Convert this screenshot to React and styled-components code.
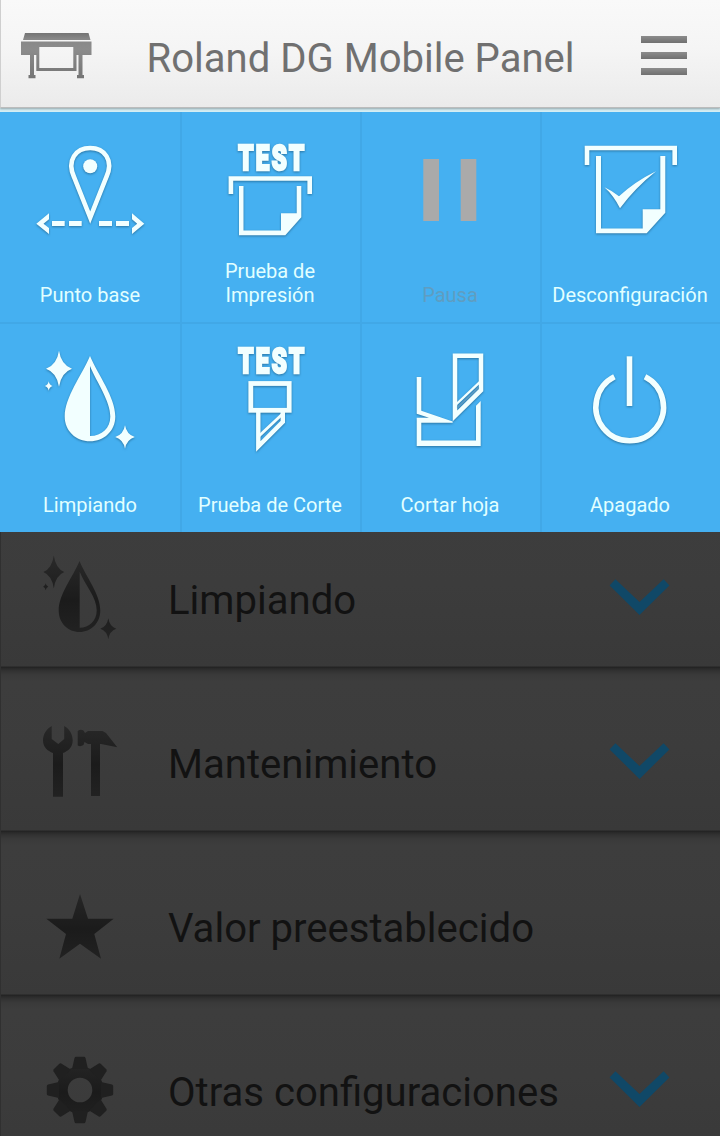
import React from "react";
import styled, { createGlobalStyle } from "styled-components";

const Global = createGlobalStyle`
  * { box-sizing: border-box; }
  html, body { margin: 0; background: #3b3b3b; }
  body { font-family: Roboto, "Liberation Sans", sans-serif; }
`;

const Page = styled.div`
  width: 720px;
  height: 1136px;
  overflow: hidden;
  display: flex;
  flex-direction: column;
  background: #3b3b3b;
`;

const HeaderArea = styled.div`
  height: 112px;
  flex: none;
  background: #d3edf3;
`;

const Header = styled.header`
  height: 108px;
  display: flex;
  align-items: center;
  padding: 0 33px 0 20px;
  border-left: 1px solid #cfcfcf;
  border-bottom: 1px solid #bcbcbc;
  background: linear-gradient(#f9f9f9, #f5f5f5 45%, #ebebeb);
  box-shadow: 0 1px 2px rgba(0, 0, 0, 0.3);
`;

const Title = styled.h1`
  flex: 1;
  margin: 10px 0 0 54.5px;
  font-size: 40.05px;
  line-height: 48px;
  font-weight: 400;
  color: #707070;
  white-space: nowrap;
`;

const MenuButton = styled.button`
  width: 46px;
  height: 39px;
  margin-top: 4px;
  padding: 0;
  border: 0;
  background: none;
  display: flex;
  flex-direction: column;
  justify-content: space-between;
`;

const MenuBar = styled.span`
  height: 7px;
  width: 100%;
  background: linear-gradient(#8c8c8c, #707070);
`;

const PrinterDrawing = styled.svg`
  flex: none;
  margin-top: 4px;
`;

const Grid = styled.nav`
  flex: none;
  display: grid;
  grid-template-columns: repeat(4, 180px);
  grid-auto-rows: 210px;
  background: #45b0f1;
`;

const Tile = styled.div`
  display: flex;
  flex-direction: column;
  align-items: center;
  justify-content: space-between;
  padding: ${(p) => (p.$top ? "20px" : "22px")} 0 15px;
  border-top: ${(p) => (p.$top ? "2px solid #41a8e7" : "0")};
  box-shadow: ${(p) => (p.$left ? "inset 2px 0 0 #41a8e7" : "none")};
`;

const TileIcon = styled.svg`
  display: block;
  flex: none;
  width: 120px;
  height: 120px;
  overflow: visible;
  color: #f2ffff;
  filter: ${(p) => (p.$flat ? "none" : "drop-shadow(0 1px 1px rgba(20, 70, 100, 0.55))")};
`;

const TileLabel = styled.span`
  font-size: 20px;
  line-height: 24px;
  text-align: center;
  white-space: pre-line;
  color: ${(p) => (p.$disabled ? "#5f9dc1" : "#e2ffff")};
`;

const List = styled.main`
  flex: 1;
  min-height: 0;
  overflow: hidden;
`;

const Row = styled.section`
  height: 164px;
  display: flex;
  align-items: flex-start;
  padding: 49px 50px 0 40px;
  background: linear-gradient(
    #282828 0, #323232 3px, #3a3a3a 7px, #3d3d3d 14px,
    #3c3c3c 80px, #393939 162px, #242424 163px);
  box-shadow: inset 1px 0 0 #303030;
  &:first-child { margin-top: -28px; }
`;

const RowIcon = styled.svg`
  flex: none;
  width: 80px;
  height: 90px;
`;

const RowLabel = styled.span`
  flex: 1;
  margin: 24px 0 0 48px;
  font-size: 40.1px;
  line-height: 48px;
  color: #121212;
  white-space: nowrap;
`;

const Chevron = styled.svg`
  flex: none;
  width: 62px;
  height: 40px;
  margin-top: 25px;
`;

const sparkle = (cx, cy, rx, ry) => {
  const k = 0.24;
  return `M${cx} ${cy - ry}Q${cx + rx * k * 0.7} ${cy - ry * k * 0.9} ${cx + rx} ${cy}Q${cx + rx * k * 0.7} ${cy + ry * k * 0.9} ${cx} ${cy + ry}Q${cx - rx * k * 0.7} ${cy + ry * k * 0.9} ${cx - rx} ${cy}Q${cx - rx * k * 0.7} ${cy - ry * k * 0.9} ${cx} ${cy - ry}Z`;
};

const TestWord = ({ y }) => (
  <text
    transform={`translate(58.2 ${y}) scale(0.7 1)`}
    fontFamily="Roboto, sans-serif" fontWeight="900" fontSize="34.5"
    textLength="94.5" lengthAdjust="spacing"
    fill="currentColor" stroke="currentColor" strokeWidth="2.6"
  >TEST</text>
);

const BasePoint = () => (
  <>
    <path d="M90.2 105.5L74 65C66.5 48 76 36 90.2 36C104.4 36 114 48 106.4 65Z" fill="none" stroke="currentColor" strokeWidth="4.6" strokeMiterlimit="10" />
    <circle cx="90.2" cy="54.3" r="7" fill="currentColor" />
    <path fill="currentColor" d="M36.3 111.7L49 101.3V107.3L43.5 111.7L49 116V122ZM52 109h12.7v5H52zM69 109h12.7v5H69zM99 109h13v5H99zM116 109h13v5h-13zM144.3 111.7L132 101.3V107.3L137.2 111.7L132 116V122Z" />
  </>
);

const TestPrint = () => (
  <>
    <TestWord y="58.4" />
    <path d="M50.9 82V66.5H129.7V82" fill="none" stroke="currentColor" strokeWidth="4.6" />
    <path fill="currentColor" d="M59 74h4.5v44.5H101V101.3h15.7V74h4.6V105.3L105.3 123.3H59Z" />
  </>
);

const Pause = () => <path fill="#aaaaaa" d="M63.3 47H79V109H63.3zM100.7 47h15.6V109h-15.6z" />;

const Unset = () => (
  <>
    <path d="M47 53V36H134.7V53" fill="none" stroke="currentColor" strokeWidth="4.6" />
    <path fill="currentColor" d="M56 44h5v72.5h41.7V97.3h17.6V44h5v56.7L106.7 121.3H56Z" />
    <path fill="currentColor" d="M64.5 75.3Q72.5 79 79 84.3Q95 69.5 116 59.3Q95 76 80 96.3Q73.5 83.5 64.5 75.3Z" />
  </>
);

const Clean = () => (
  <>
    <path fill="currentColor" fillRule="evenodd" d="M90 34C98 53 115.3 75 115.3 94.5C115.3 109 104 119.3 90 119.3S64.7 109 64.7 94.5C64.7 75 82 53 90 34ZM90 44V114C102 114 110.3 106 110.3 94.5C110.3 79 97 61 90 44Z" />
    <path fill="currentColor" d={sparkle(59, 46.7, 13, 18)} />
    <path fill="currentColor" d={sparkle(48.7, 64, 3.8, 4.8)} />
    <path fill="currentColor" d={sparkle(125, 115, 9.8, 11.8)} />
  </>
);

const TestCut = () => (
  <>
    <TestWord y="51.4" />
    <g fill="none" stroke="currentColor">
      <rect x="70.8" y="61.5" width="38.4" height="26.8" strokeWidth="4.8" />
      <path d="M78.3 90V124.5L102.8 99.8V90" strokeWidth="4.4" strokeMiterlimit="10" />
      <path d="M79 114L103 91.5" strokeWidth="3" />
    </g>
  </>
);

const CutSheet = () => (
  <>
    <g fill="none" stroke="currentColor">
      <path d="M95 93.8V33.8H121V68.2Z" strokeWidth="4.5" strokeMiterlimit="10" />
      <path d="M96 82.5L120 59.8" strokeWidth="2.4" />
    </g>
    <path d="M97.3 85.7L118.7 65.3" stroke="#5d9bc2" strokeWidth="1.8" />
    <path fill="currentColor" d="M56.7 55h4.6v33.7L92.7 99.4v1.4H61.3v17.7H116V83.7l4.7-4.7V124H56.7V95.7H69L56.7 91.8Z" />
  </>
);

const Power = () => (
  <g fill="none" stroke="currentColor" strokeWidth="5.6">
    <path d="M74.4 54.8A33.8 33.8 0 1 0 105 54.8" />
    <path d="M89.5 34.3V84" />
  </g>
);

const RowClean = () => (
  <>
    <path fillRule="evenodd" d="M79.5 58C86 74 100.3 91 100.3 107.5C100.3 120 91 129 79.5 129S58.7 120 58.7 107.5C58.7 91 73 74 79.5 58ZM79.7 68.7V124.7C89 124.7 96.7 118 96.7 107.5C96.7 94 85.5 83 79.7 68.7Z" />
    <path d={sparkle(53.8, 69, 10.5, 16.5)} />
    <path d={sparkle(45.7, 83.7, 2.6, 3.5)} />
    <path d={sparkle(108.3, 125.7, 8, 10.5)} />
  </>
);

const Tools = () => (
  <>
    <path d="M51.7 59V72L58.3 77L64.2 72V59C70 62 72.7 68 72.7 73.5C72.7 80 68.5 84 63 86V129.7H53V86C47.5 84 43 80 43 73.5C43 67 46.5 62 51.7 59Z" />
    <path d="M77.7 64Q80.5 62 83.5 63.5L85 66L88 64H102.5L106 66L117.3 80.3L101 77H100V129H91V77H88L84.5 75L83.5 78Q80.5 80 77.7 78.5Z" />
  </>
);

const Star = () => (
  <path d="M80 63L88 87.7H113.7L94.3 103L101 127.7L80 112.7L59.3 127.7L66 103L46.3 87.7H72.3Z" />
);

const Gear = () => (
  <>
    <circle cx="80" cy="95" r="17.9" fill="none" stroke="url(#rowInk)" strokeWidth="11.2" />
    {[0, 45, 90, 135, 180, 225, 270, 315].map((a) => (
      <path key={a} fill="#202020" transform={`rotate(${a} 80 95)`} d="M72 74L74.5 63Q75 61.8 76 61.8H84Q85 61.8 85.5 63L88 74Z" />
    ))}
  </>
);

const tiles = [
  { label: "Punto base", Icon: BasePoint },
  { label: "Prueba de\nImpresión", Icon: TestPrint },
  { label: "Pausa", Icon: Pause, disabled: true },
  { label: "Desconfiguración", Icon: Unset },
  { label: "Limpiando", Icon: Clean },
  { label: "Prueba de Corte", Icon: TestCut },
  { label: "Cortar hoja", Icon: CutSheet },
  { label: "Apagado", Icon: Power },
];

const rows = [
  { label: "Limpiando", Icon: RowClean, expandable: true },
  { label: "Mantenimiento", Icon: Tools, expandable: true },
  { label: "Valor preestablecido", Icon: Star },
  { label: "Otras configuraciones", Icon: Gear, expandable: true },
];

const PrinterIcon = () => (
  <PrinterDrawing width="71" height="46" viewBox="0 0 71 46">
    <defs>
      <linearGradient id="printerInk" gradientUnits="userSpaceOnUse" x1="0" y1="0" x2="0" y2="46">
        <stop offset="0" stopColor="#747474" />
        <stop offset="0.13" stopColor="#888" />
        <stop offset="0.35" stopColor="#8c8c8c" />
        <stop offset="1" stopColor="#747474" />
      </linearGradient>
    </defs>
    <path fill="url(#printerInk)" fillRule="evenodd" d="M4 0H67.5L69.5 7H2ZM0 8.5H70.5V22H61.5V42H63V45.2H56V42H57.5V22H55.5V38H15.3V22H13V42H14.5V45.2H7.5V42H9V22H0ZM18.3 14V35H52.3V14Z" />
  </PrinterDrawing>
);

export default function App() {
  return (
    <>
      <Global />
      <Page>
        <HeaderArea>
          <Header>
            <PrinterIcon />
            <Title>Roland DG Mobile Panel</Title>
            <MenuButton aria-label="Menu"><MenuBar /><MenuBar /><MenuBar /></MenuButton>
          </Header>
        </HeaderArea>
        <Grid>
          {tiles.map(({ label, Icon, disabled }, i) => (
            <Tile key={label} $left={i % 4 > 0} $top={i > 3}>
              <TileIcon viewBox="30 22 120 120" $flat={disabled}><Icon /></TileIcon>
              <TileLabel $disabled={disabled}>{label}</TileLabel>
            </Tile>
          ))}
        </Grid>
        <List>
          {rows.map(({ label, Icon, expandable }) => (
            <Row key={label}>
              <RowIcon viewBox="40 50 80 90" fill="url(#rowInk)">
                <defs>
                  <linearGradient id="rowInk" gradientUnits="userSpaceOnUse" x1="0" y1="58" x2="0" y2="130">
                    <stop offset="0" stopColor="#282828" />
                    <stop offset="0.55" stopColor="#1b1b1b" />
                    <stop offset="1" stopColor="#222222" />
                  </linearGradient>
                </defs>
                <Icon />
              </RowIcon>
              <RowLabel>{label}</RowLabel>
              {expandable && (
                <Chevron viewBox="0 0 62 40">
                  <path d="M1.6 7.4L7.4 1.2L31.5 24L55.6 1.2L61.4 7.4L31.5 37Z" fill="#104867" />
                </Chevron>
              )}
            </Row>
          ))}
        </List>
      </Page>
    </>
  );
}
